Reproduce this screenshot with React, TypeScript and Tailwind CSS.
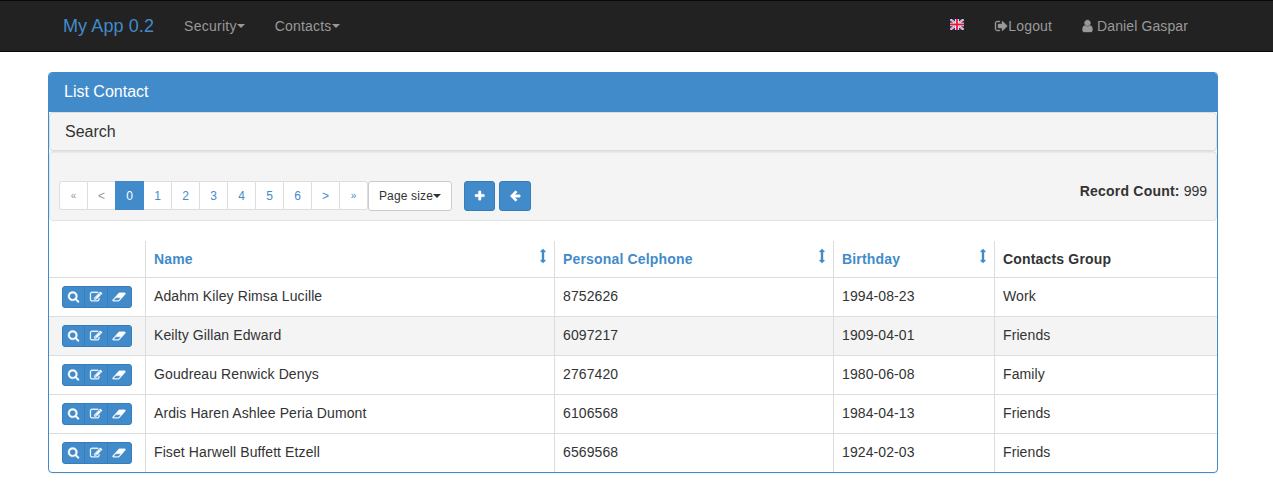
import React from "react";

type Glyph = { box: string; d: string };

const glyphs = {
  search: {
    box: "64 64 1664 1792",
    d: "M1216 832q0-185-131.5-316.5t-316.5-131.5-316.5 131.5-131.5 316.5 131.5 316.5 316.5 131.5 316.5-131.5 131.5-316.5zm512 832q0 52-38 90t-90 38q-54 0-90-38l-343-342q-179 124-399 124-143 0-273.5-55.5t-225-150-150-225-55.5-273.5 55.5-273.5 150-225 225-150 273.5-55.5 273.5 55.5 225 150 150 225 55.5 273.5q0 220-124 399l343 343q37 37 37 90z",
  },
  edit: {
    box: "0 0 1792 1792",
    d: "M888 1184l116-116-152-152-116 116v56h96v96h56zm440-720q-16-16-33 1l-350 350q-17 17-1 33t33-1l350-350q17-17 1-33zm80 594v190q0 119-84.5 203.5t-203.5 84.5h-832q-119 0-203.5-84.5t-84.5-203.5v-832q0-119 84.5-203.5t203.5-84.5h832q63 0 117 25 15 7 18 23 3 17-9 29l-49 49q-14 14-32 8-23-6-45-6h-832q-66 0-113 47t-47 113v832q0 66 47 113t113 47h832q66 0 113-47t47-113v-126q0-13 9-22l64-64q15-15 35-7t20 29zm-96-738l288 288-672 672h-288v-288zm444 132l-92 92-288-288 92-92q28-28 68-28t68 28l152 152q28 28 28 68t-28 68z",
  },
  eraser: {
    box: "-64 0 1920 1792",
    d: "M768 1408l336-384h-768l-336 384h768zm1013-1077q15 34 9.500 71.500t-30.500 65.500l-896 1024q-38 44-96 44h-768q-38 0-69.500-20.500t-47.500-54.500q-15-34-9.500-71.500t30.500-65.500l896-1024q38-44 96-44h768q38 0 69.500 20.500t47.500 54.500z",
  },
  user: {
    box: "192 0 1408 1792",
    d: "M1536 1399q0 109-62.500 187t-150.500 78h-854q-88 0-150.500-78t-62.500-187q0-85 8.500-160.500t31.500-152 58.500-131 94-89 134.500-34.500q131 128 313 128t313-128q76 0 134.500 34.500t94 89 58.500 131 31.500 152 8.500 160.500zm-256-887q0 159-112.500 271.500t-271.500 112.500-271.500-112.500-112.500-271.500 112.500-271.500 271.500-112.500 271.500 112.500 112.500 271.500z",
  },
  signOut: {
    box: "64 0 1664 1792",
    d: "M704 1440q0 4 1 20t.5 26.500-3 23.500-10 19.500-20.500 6.500h-320q-119 0-203.500-84.500t-84.500-203.500v-704q0-119 84.500-203.500t203.500-84.500h320q13 0 22.500 9.500t9.500 22.500q0 4 1 20t.5 26.500-3 23.500-10 19.500-20.500 6.500h-320q-66 0-113 47t-47 113v704q0 66 47 113t113 47h312l11.500 1 11.500 3 8 5.500 7 9 2 13.500zm928-544q0 26-19 45l-544 544q-19 19-45 19t-45-19-19-45v-288h-448q-26 0-45-19t-19-45v-384q0-26 19-45t45-19h448v-288q0-26 19-45t45-19 45 19l544 544q19 19 19 45z",
  },
  plus: {
    box: "192 0 1408 1792",
    d: "M1600 736v192q0 40-28 68t-68 28h-416v416q0 40-28 68t-68 28h-192q-40 0-68-28t-28-68v-416h-416q-40 0-68-28t-28-68v-192q0-40 28-68t68-28h416v-416q0-40 28-68t68-28h192q40 0 68 28t28 68v416h416q40 0 68 28t28 68z",
  },
  arrowLeft: {
    box: "128 64 1536 1792",
    d: "M1664 896v128q0 53-32.500 90.500t-84.500 37.500h-704l293 294q38 36 38 90t-38 90l-75 76q-37 37-90 37-52 0-91-37l-651-652q-37-37-37-90 0-52 37-91l651-650q38-38 91-38 52 0 90 38l75 74q38 38 38 91t-38 91l-293 293h704q52 0 84.500 37.500t32.500 90.500z",
  },
  arrowsV: {
    box: "576 0 640 1792",
    d: "M1216 320q0 26-19 45t-45 19h-128v1024h128q26 0 45 19t19 45-19 45l-256 256q-19 19-45 19t-45-19l-256-256q-19-19-19-45t19-45 45-19h128v-1024h-128q-26 0-45-19t-19-45 19-45l256-256q19-19 45-19t45 19l256 256q19 19 19 45z",
  },
} satisfies Record<string, Glyph>;

function Icon({ name, className }: { name: keyof typeof glyphs; className: string }) {
  return (
    <svg viewBox={glyphs[name].box} className={`shrink-0 overflow-visible fill-current stroke-current ${className}`}>
      <path d={glyphs[name].d} strokeWidth="50" />
    </svg>
  );
}

function Caret() {
  return <span className="h-0 w-0 shrink-0 border-x-4 border-t-4 border-x-transparent border-t-current" />;
}

function Flag() {
  return (
    <svg viewBox="0 0 14 11" className="h-[11px] w-[14px]">
      <rect width="14" height="11" fill="#26307c" />
      <path d="M0 0L14 11M14 0L0 11" stroke="#fff" strokeWidth="2" />
      <path d="M0 0L14 11M14 0L0 11" stroke="#e0364c" strokeWidth="0.7" />
      <path d="M7 0V11M0 5.500H14" stroke="#fff" strokeWidth="3.600" />
      <path d="M7 0V11M0 5.500H14" stroke="#e21a38" strokeWidth="1.800" />
    </svg>
  );
}

const pages = ["«", "<", "0", "1", "2", "3", "4", "5", "6", ">", "»"];

function pageStyle(i: number) {
  if (i === 2) return "border-[#428bca] bg-[#428bca] text-white z-10";
  if (i < 2) return "border-[#ddd] bg-white text-[#999]";
  return "border-[#ddd] bg-white text-[#428bca]";
}

function Pagination() {
  return (
    <ul className="flex">
      {pages.map((p, i) => (
        <li
          key={p}
          className={`relative -mr-px flex h-[29px] w-[29px] items-center justify-center border first:rounded-l-[3px] last:mr-0 last:rounded-r-[3px] ${p === "«" || p === "»" ? "text-[10px]" : "text-xs"} ${pageStyle(i)}`}
        >
          {p}
        </li>
      ))}
    </ul>
  );
}

const columns = [
  { label: "Name", sortable: true },
  { label: "Personal Celphone", sortable: true },
  { label: "Birthday", sortable: true },
  { label: "Contacts Group", sortable: false },
];

const rows = [
  ["Adahm Kiley Rimsa Lucille", "8752626", "1994-08-23", "Work"],
  ["Keilty Gillan Edward", "6097217", "1909-04-01", "Friends"],
  ["Goudreau Renwick Denys", "2767420", "1980-06-08", "Family"],
  ["Ardis Haren Ashlee Peria Dumont", "6106568", "1984-04-13", "Friends"],
  ["Fiset Harwell Buffett Etzell", "6569568", "1924-02-03", "Friends"],
];

const gridCols = "grid grid-cols-[96px_409px_279px_161px_1fr]";

function RowActions() {
  const base = "flex h-[22px] items-center justify-center border border-[#357ebd] bg-[#428bca] text-white";
  return (
    <div className="flex pt-2 pl-[13px]">
      <div className={`${base} w-[23px] rounded-l-[3px]`}>
        <Icon name="search" className="h-3 w-[11.14px]" />
      </div>
      <div className={`${base} -ml-px w-6`}>
        <Icon name="edit" className="h-3 w-3" />
      </div>
      <div className={`${base} -ml-px w-[25px] rounded-r-[3px]`}>
        <Icon name="eraser" className="h-3 w-[12.86px]" />
      </div>
    </div>
  );
}

export default function App() {
  return (
    <div className="min-h-[498px] bg-white font-['Liberation_Sans',Arial,sans-serif] text-sm leading-5 text-[#333]">
      <nav className="h-[52px] border-y border-[#080808] bg-[#222] text-[#999]">
        <div className="ml-12 flex h-[50px] w-[1170px] items-center px-[15px]">
          <span className="text-lg leading-5 tracking-[0.1px] text-[#428bca]">My App 0.2</span>
          <span className="ml-[30px] flex items-center tracking-[0.25px]">
            Security
            <Caret />
          </span>
          <span className="ml-[30px] flex items-center tracking-[0.2px]">
            Contacts
            <Caret />
          </span>
          <div className="ml-auto flex items-center pr-[15px]">
            <span className="-mt-[3px]">
              <Flag />
            </span>
            <span className="ml-[31px] flex items-center tracking-[0.15px]">
              <Icon name="signOut" className="h-[14px] w-[13px]" />
              Logout
            </span>
            <span className="ml-[30px] flex items-center tracking-[0.11px]">
              <Icon name="user" className="mr-1 h-[14px] w-[11px]" />
              Daniel Gaspar
            </span>
          </div>
        </div>
      </nav>

      <main className="mt-5 ml-12 w-[1170px] overflow-hidden rounded border border-[#428bca] shadow-[0_1px_1px_rgba(0,0,0,0.05)]">
        <h1 className="h-[39px] bg-[#428bca] px-[15px] pt-[9px] text-base leading-5 text-white">List Contact</h1>
        <div className="h-[39px] rounded border border-[#ddd] bg-[#f4f4f4] px-[15px] pt-[9px] text-base leading-5 shadow-[0_1px_1px_rgba(0,0,0,0.05)]">
          Search
        </div>
        <div className="flex h-[70px] items-start rounded border border-[#e3e3e3] bg-[#f4f4f4] px-[9px] pt-[29px] shadow-[inset_0_1px_1px_rgba(0,0,0,0.05)]">
          <Pagination />
          <button className="flex h-[30px] w-[84px] items-center justify-center rounded-[3px] border border-[#ccc] bg-white text-xs tracking-[0.17px]">
            Page size
            <Caret />
          </button>
          <button className="ml-3 flex h-[30px] w-[31px] items-center justify-center rounded-[3px] border border-[#357ebd] bg-[#428bca] text-white">
            <Icon name="plus" className="h-3 w-[9.43px]" />
          </button>
          <button className="ml-1 flex h-[30px] w-8 items-center justify-center rounded-[3px] border border-[#357ebd] bg-[#428bca] text-white">
            <Icon name="arrowLeft" className="h-3 w-[10.29px]" />
          </button>
          <p className="ml-auto">
            <b className="tracking-[0.22px]">Record Count:</b> 999
          </p>
        </div>

        <div className={`${gridCols} mt-5 h-9`}>
          <div />
          {columns.map((c) => (
            <div
              key={c.label}
              className={`flex justify-between border-l border-[#ddd] pt-2 pr-2 pl-2 font-bold tracking-[0.17px] ${c.sortable ? "text-[#428bca]" : ""}`}
            >
              {c.label}
              {c.sortable && <Icon name="arrowsV" className="h-[14px] w-[6px]" />}
            </div>
          ))}
        </div>
        {rows.map((r, i) => (
          <div key={r[0]} className={`${gridCols} h-[39px] border-t border-[#ddd] ${i === 1 ? "bg-[#f4f4f4]" : ""}`}>
            <RowActions />
            {r.map((cell, j) => (
              <div key={j} className="border-l border-[#ddd] px-2 pt-2 tracking-[0.1px]">
                {cell}
              </div>
            ))}
          </div>
        ))}
      </main>
    </div>
  );
}
